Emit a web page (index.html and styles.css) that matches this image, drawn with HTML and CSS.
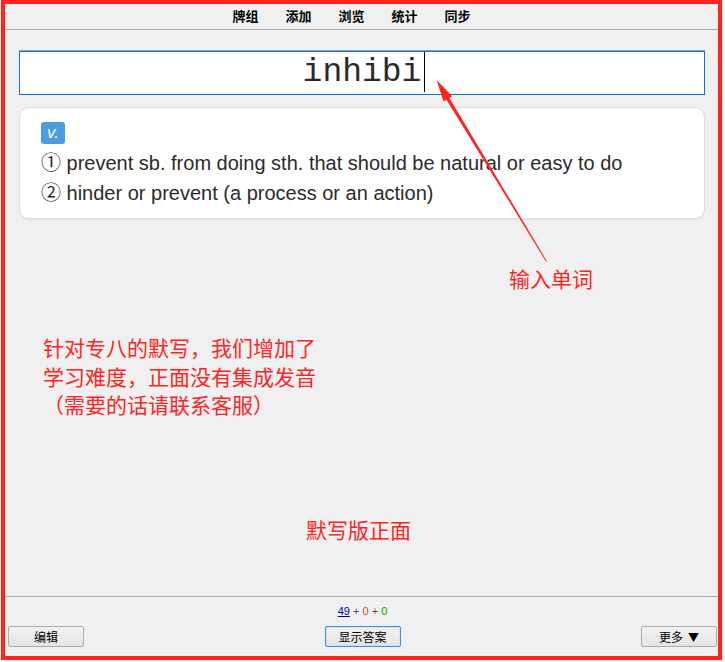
FILE: index.html
```html
<!DOCTYPE html>
<html>
	<head>
		<meta charset="UTF-8">
		<title>默写版正面</title>
		<link rel="stylesheet" href="styles.css">
	</head>
	<body>
		<div class="frame">
			<div class="toolbar">
				<a>牌组</a>
				<a>添加</a>
				<a>浏览</a>
				<a>统计</a>
				<a>同步</a>
			</div>
			<div class="main">
				<div class="typebox">inhibi<span class="caret"></span></div>
				<div class="card">
					<div class="pos"><span class="badge">v.</span></div>
					<p>① prevent sb. from doing sth. that should be natural or easy to do</p>
					<p>② hinder or prevent (a process or an action)</p>
				</div>
			</div>
			<div class="bottom">
				<div class="counts"><u class="new">49</u> + <span class="learn">0</span> + <span class="review">0</span></div>
				<div class="btns">
					<button>编辑</button>
					<button class="primary">显示答案</button>
					<button>更多<span class="tri">▼</span></button>
				</div>
			</div>
		</div>
		<!-- 标注层 -->
		<div class="notes">
			<svg class="arrow" width="725" height="662" viewBox="0 0 725 662">
				<polygon points="436.5,80 452.2,96.2 449.4,97.9 546.9,261.2 546.1,261.8 446.4,99.7 443.6,101.4" fill="#ff2323"/>
			</svg>
			<div class="note note-input">输入单词</div>
			<div class="note note-desc">针对专八的默写，我们增加了<br>学习难度，正面没有集成发音<br>（需要的话请联系客服）</div>
			<div class="note note-title">默写版正面</div>
		</div>
	</body>
</html>
```

FILE: styles.css
```css
html,
body {
	margin: 0;
	padding: 0;
	background: #ffffff;
}

body {
	position: relative;
	width: 725px;
	height: 662px;
	overflow: hidden;
	font-family: "Liberation Sans", "Noto Sans CJK SC", sans-serif;
}

.frame {
	box-sizing: border-box;
	width: 721px;
	height: 660px;
	margin: 0 3px 2px 1px;
	border: 4px solid #ff2424;
	box-shadow: 0 0 1px rgba(255, 0, 0, 0.6);
	background: #f0f0f0;
	display: flex;
	flex-direction: column;
}

.toolbar {
	height: 25px;
	border-bottom: 1px solid #aaaaaa;
	display: flex;
	justify-content: center;
	gap: 27px;
	padding-right: 20px;
	font: bold 13px/23px "Noto Sans CJK SC", sans-serif;
}

.toolbar a {
	color: #000000;
	cursor: pointer;
}

.main {
	flex: 1;
	padding: 21px 13px 0 14px;
}

.typebox {
	box-sizing: border-box;
	height: 44px;
	background: #ffffff;
	border: 1px solid #0078d7;
	box-shadow: 0 -1px 0 #a0a0a0;
	text-align: center;
	font: 33px/42px "Liberation Mono", monospace;
	color: #2a2a2a;
}

.caret {
	display: inline-block;
	width: 1px;
	height: 40px;
	background: #000000;
	vertical-align: -11px;
	margin-left: 3px;
	margin-right: -4px;
}

.card {
	margin-top: 12px;
	background: #ffffff;
	border: 1px solid #dedede;
	border-radius: 10px;
	box-shadow: 0 1px 2px rgba(0, 0, 0, 0.06);
	padding: 14px 20px 10px 21px;
	color: #2b2b2b;
}

.pos {
	height: 22px;
	margin-bottom: 4px;
}

.badge {
	display: inline-block;
	width: 24px;
	height: 22px;
	border-radius: 3px;
	background: #4a9de0;
	color: #ffffff;
	font: italic 17px/22px "Liberation Sans", sans-serif;
	text-align: center;
}

.card p {
	margin: 0;
	font-size: 20px;
	line-height: 30px;
}

.bottom {
	box-sizing: border-box;
	height: 60px;
	border-top: 1px solid #aaaaaa;
	padding: 6px 1px 0 3px;
}

.counts {
	text-align: center;
	font: 11px/16px "Liberation Sans", sans-serif;
	color: #555555;
}

.new {
	color: #0000aa;
}

.learn {
	color: #c35617;
}

.review {
	color: #00aa00;
}

.btns {
	margin-top: 7px;
	display: flex;
	justify-content: space-between;
}

.btns button {
	box-sizing: border-box;
	width: 76px;
	height: 21px;
	padding: 0;
	border: 1px solid #adadad;
	border-radius: 2px;
	background: linear-gradient(#f2f2f2, #e4e4e4);
	font: 12px/19px "Noto Sans CJK SC", sans-serif;
	color: #000000;
}

.btns .tri {
	margin-left: 5px;
	font-size: 11px;
}

.btns .primary {
	border-color: #3d8fd6;
	box-shadow: inset 0 0 0 1px #cde4f7;
}

/* 标注 */
.notes {
	position: absolute;
	left: 0;
	top: 0;
	width: 725px;
	height: 662px;
	pointer-events: none;
}

.arrow {
	position: absolute;
	left: 0;
	top: 0;
}

.note {
	position: absolute;
	color: #ff2424;
	font: 21px/28px "Noto Sans CJK SC", sans-serif;
	white-space: nowrap;
}

.note-input {
	left: 509px;
	top: 264px;
}

.note-desc {
	left: 43px;
	top: 333px;
	line-height: 28.5px;
}

.note-title {
	left: 306px;
	top: 515px;
}
```
